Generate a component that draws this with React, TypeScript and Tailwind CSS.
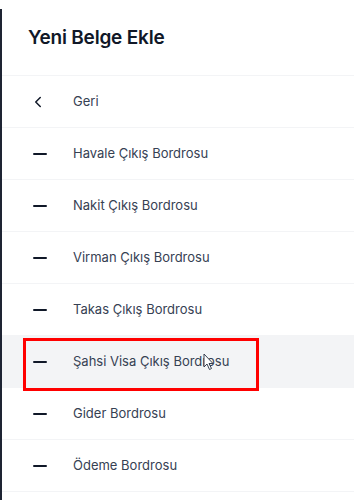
import { ChevronLeft } from 'lucide-react';

const items = [
    'Havale Çıkış Bordrosu',
    'Nakit Çıkış Bordrosu',
    'Virman Çıkış Bordrosu',
    'Takas Çıkış Bordrosu',
    'Şahsi Visa Çıkış Bordrosu',
    'Gider Bordrosu',
    'Ödeme Bordrosu',
];

function Dash() {
    return <div className="w-[14px] h-[2px] bg-gray-900 rounded-sm" />;
}

function Cursor() {
    return (
        <svg width="12" height="18" viewBox="0 0 12 18" className="absolute left-[201px] top-[17px]">
            <path d="M1 1 L1 14 L4 11 L6.5 16.5 L8.5 15.5 L6 10.5 L10 10.5 Z" fill="#fff" stroke="#374151" strokeWidth="1" strokeLinejoin="round" />
        </svg>
    );
}

export default function App() {
    return (
        <div className="w-[354px] h-[500px] bg-white overflow-hidden flex" style={{ fontFamily: 'Inter, "Noto Sans", sans-serif' }}>
            <div className="w-[2px] shrink-0 flex flex-col">
                <div className="h-[9px] bg-white" />
                <div className="flex-1 bg-[#1e2433]" />
            </div>
            <div className="flex-1 flex flex-col">
                <div className="h-[76px] flex items-center pl-[26px] border-b border-gray-100">
                    <h1 className="text-[19px] font-semibold text-gray-900 tracking-[-0.2px] pt-[2px]">Yeni Belge Ekle</h1>
                </div>
                <div className="h-[52px] flex items-center border-b border-gray-100">
                    <div className="w-[71px] pl-[27px]">
                        <ChevronLeft className="w-[18px] h-[18px] text-gray-900" strokeWidth={2} />
                    </div>
                    <span className="text-[13px] text-gray-700">Geri</span>
                </div>
                {items.map((label, i) => {
                    const active = i === 4;
                    return (
                        <div
                            key={label}
                            className={`relative h-[52px] flex items-center border-b border-gray-100 ${active ? 'bg-gray-100' : ''}`}
                        >
                            <div className="w-[71px] pl-[31px]">
                                <Dash />
                            </div>
                            <span className="text-[13px] text-gray-700 pt-[1px]">{label}</span>
                            {active && (
                                <>
                                    <div className="absolute left-[21px] top-[2px] w-[236px] h-[53px] border-[3px] border-[#ff0000]" />
                                    <Cursor />
                                </>
                            )}
                        </div>
                    );
                })}
            </div>
        </div>
    );
}
